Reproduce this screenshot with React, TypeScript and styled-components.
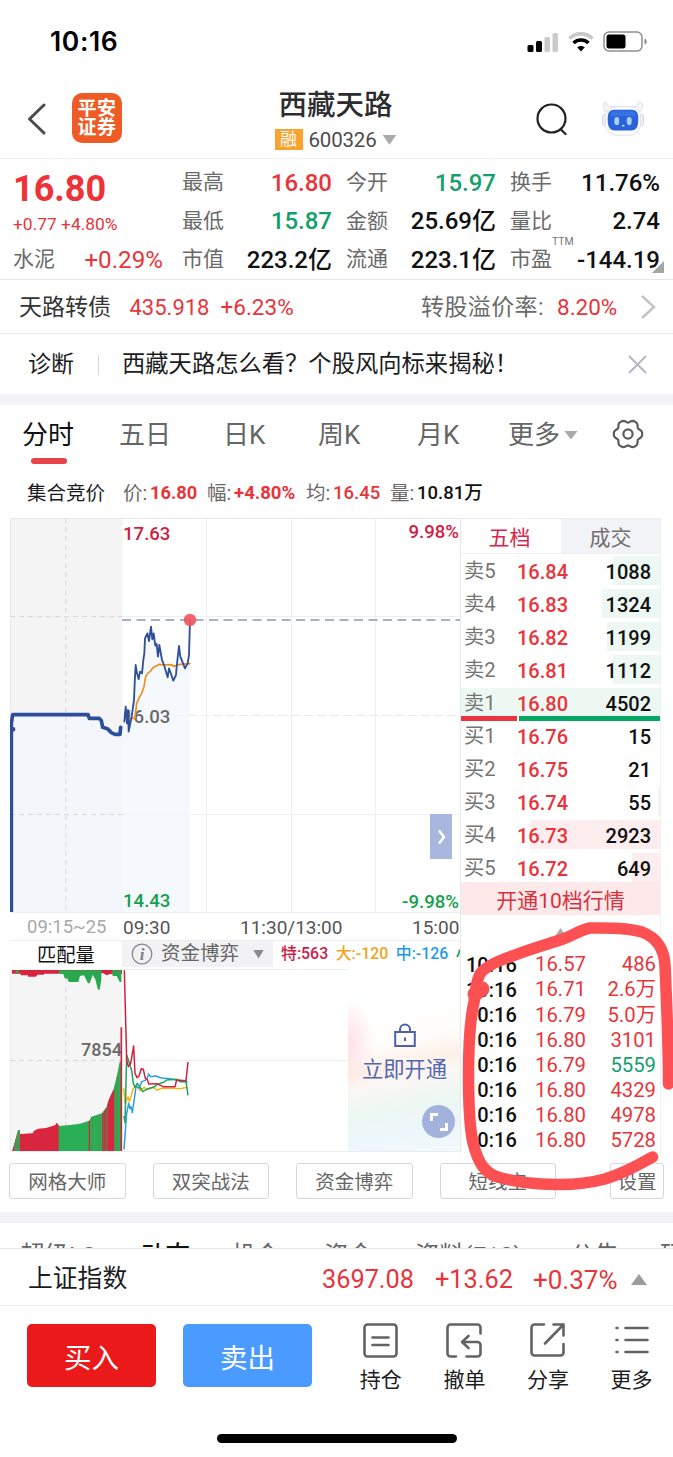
import React from "react";
import styled, { createGlobalStyle } from "styled-components";

const RED = "#e8343a";
const GREEN = "#14a06c";
const INK = "#1c1c1e";
const GREY = "#6a6a6a";

const Global = createGlobalStyle`
  * { box-sizing: border-box; }
  body { margin: 0; background: #fff; }
  svg { display: block; flex: none; }
`;

const Page = styled.main`
  position: relative;
  width: 673px;
  height: 1457px;
  overflow: hidden;
  background: #fff;
  color: ${INK};
  font-family: Roboto, "Noto Sans CJK SC", sans-serif;
  line-height: 1;
  white-space: nowrap;
`;

const Txt = styled.span<{ $s: number; $c?: string; $w?: number; $ls?: number }>`
  font-size: ${(p) => p.$s}px;
  color: ${(p) => p.$c || "inherit"};
  font-weight: ${(p) => p.$w || 400};
  letter-spacing: ${(p) => p.$ls || 0}px;
`;

const StatusBar = styled.div`
  display: flex;
  align-items: center;
  justify-content: space-between;
  height: 78px;
  padding: 5px 25px 0 50px;
`;
const Clock = styled.span`
  font: 600 26.5px/1 Inter, sans-serif;
  color: #000;
  letter-spacing: 0.6px;
`;
const StatusIcons = styled.div`
  display: flex;
  align-items: center;
  gap: 9px;
`;

const Header = styled.header`
  display: grid;
  grid-template-columns: 48px 150px 313px 66px 46px;
  align-items: center;
  height: 81px;
  padding-left: 24px;
  border-bottom: 1px solid #f0f0f2;
`;
const Logo = styled.div`
  width: 50px;
  height: 50px;
  border-radius: 10px;
  background: #ee5b24;
  color: #fff;
  font-size: 19px;
  font-weight: 700;
  line-height: 19px;
  letter-spacing: 0.5px;
  padding-top: 6px;
  text-align: center;
`;
const Title = styled.div`
  display: flex;
  flex-direction: column;
  align-items: center;
  gap: 9px;
  width: 227px;
  padding-top: 6px;
`;
const CodeLine = styled.div`
  display: flex;
  align-items: center;
  gap: 6px;
`;
const MarginBadge = styled.span`
  width: 28px;
  height: 21px;
  background: #fba32f;
  color: #fff;
  font-size: 17px;
  line-height: 21px;
  text-align: center;
`;
const Caret = styled.i<{ $up?: boolean; $w?: number; $h?: number; $c?: string; $ml?: number }>`
  flex: none;
  width: ${(p) => p.$w || 14}px;
  height: ${(p) => p.$h || 10}px;
  margin-left: ${(p) => p.$ml || 0}px;
  background: ${(p) => p.$c || "#aaa"};
  clip-path: ${(p) => (p.$up ? "polygon(50% 0,100% 100%,0 100%)" : "polygon(0 0,100% 0,50% 100%)")};
`;

const Quote = styled.section`
  position: relative;
  display: grid;
  grid-template-columns: 150px 150px 150px 150px;
  column-gap: 14px;
  height: 121px;
  padding: 4.5px 13px 0;
  border-bottom: 1px solid #e6e6e9;
`;
const QuoteCol = styled.div<{ $first?: boolean }>`
  display: grid;
  grid-template-rows: repeat(3, 38.5px);
  margin-left: ${(p) => (p.$first ? "0" : "5px")};
  margin-right: ${(p) => (p.$first ? "0" : "-5px")};
`;
const Cell = styled.div<{ $drop?: number }>`
  display: flex;
  align-items: center;
  justify-content: space-between;
  padding-top: ${(p) => p.$drop || 0}px;
`;
const Ttm = styled.span`
  position: absolute;
  left: 552px;
  top: 78px;
  font-size: 10.5px;
  color: #777;
`;
const Corner = styled.i`
  position: absolute;
  left: 652px;
  top: 102px;
  width: 12px;
  height: 12px;
  background: #a5a5a5;
  clip-path: polygon(100% 0, 100% 100%, 0 100%);
`;

const BondRow = styled.section`
  display: grid;
  grid-template-columns: 110.5px 91px 200.5px 136px 83px 20px;
  align-items: center;
  height: 54px;
  padding: 2px 0 0 19px;
  border-bottom: 1px solid #e9e9ec;
`;
const Diagnose = styled.section`
  display: grid;
  grid-template-columns: 70px 24px 506px 20px;
  align-items: center;
  height: 60px;
  padding: 1px 0 0 28px;
`;
const Divider = styled.i`
  width: 1px;
  height: 20px;
  background: #d5d5d8;
`;
const Band = styled.div`
  height: 11px;
  background: #f2f2f7;
`;

const Tabs = styled.nav`
  display: grid;
  grid-template-columns: 97px 104px 95px 99px 91px 104px 32px;
  align-items: center;
  height: 58px;
  padding-left: 22px;
  font-size: 26px;
  color: #666;
`;
const Tab = styled.div<{ $on?: boolean }>`
  position: relative;
  display: flex;
  align-items: center;
  gap: 4px;
  height: 58px;
  padding-top: 2px;
  color: ${(p) => (p.$on ? "#111" : "#666")};
  &::after {
    content: "";
    display: ${(p) => (p.$on ? "block" : "none")};
    position: absolute;
    left: 9px;
    bottom: -1px;
    width: 36px;
    height: 6px;
    border-radius: 3px;
    background: #e6434a;
  }
`;
const InfoRow = styled.div`
  display: grid;
  grid-template-columns: 96px 84px 99px 84px 100px;
  align-items: center;
  height: 55px;
  padding: 6px 0 0 27px;
`;
const InfoItem = styled.div`
  display: grid;
  grid-template-columns: 27px auto;
  align-items: center;
  justify-content: start;
`;

const Market = styled.section`
  display: grid;
  grid-template-columns: 451px 200px;
  width: 651px;
  height: 634px;
  margin-left: 10px;
`;
const Left = styled.div`
  position: relative;
  border-right: 1px solid #e6e9ee;
`;
const Expand = styled.button`
  position: absolute;
  left: 420px;
  top: 296px;
  width: 22px;
  height: 45px;
  border: 0;
  padding: 0 0 0 2px;
  background: #a9b7df;
  display: grid;
  place-items: center;
`;
const Axis = styled.div`
  display: grid;
  grid-template-columns: 96px 117px 172px 50px;
  align-items: center;
  height: 28px;
  padding: 2px 0 0 17px;
  border-top: 1px solid #eceef1;
`;
const IndicatorRow = styled.div`
  display: grid;
  grid-template-columns: 112px 151px 1fr;
  height: 29px;
  border-top: 1px solid #eceef1;
`;
const MatchLabel = styled.div`
  padding: 5px 0 0 27px;
`;
const Selector = styled.div`
  display: flex;
  align-items: center;
  gap: 8px;
  height: 26px;
  padding-left: 9px;
  background: #f2f2f4;
`;
const Flows = styled.div`
  display: flex;
  gap: 7.5px;
  padding: 5px 0 0 8px;
  overflow: hidden;
  height: 26px;
`;
const FundChart = styled.div`
  position: relative;
  height: 183px;
  border-bottom: 1px solid #e9ecf0;
`;
const Unlock = styled.div`
  position: absolute;
  left: 338px;
  top: 12px;
  width: 112px;
  height: 170px;
  display: flex;
  flex-direction: column;
  align-items: center;
  gap: 11px;
  padding: 42px 0 0 1px;
  background:
    radial-gradient(ellipse 26px 46px at 0 62px, rgba(255, 216, 224, 0.8), rgba(255, 255, 255, 0)),
    linear-gradient(168deg, #fff 22%, #fffdfb 36%, #fdf0e9 49%, #fbf7f5 57%, #ebf7f2 72%, #ecf6fa 84%, #f4f9fd 100%);
`;
const FullScreen = styled.button`
  position: absolute;
  left: 412px;
  top: 136px;
  width: 33px;
  height: 33px;
  border: 0;
  padding: 0;
  border-radius: 50%;
  background: #a3b2dc;
  display: grid;
  place-items: center;
`;

const Right = styled.div`
  position: relative;
  border-right: 1px solid #f0f1f3;
  border-top: 1px solid #ececef;
`;
const BookTabs = styled.div`
  display: grid;
  grid-template-columns: 100px 99px;
  height: 35px;
  border-bottom: 1px solid #eeeef0;
`;
const BookTab = styled.div<{ $on?: boolean }>`
  display: flex;
  align-items: center;
  justify-content: center;
  padding-top: 4px;
  font-size: 21px;
  padding-right: ${(p) => (p.$on ? 3 : 0)}px;
  color: ${(p) => (p.$on ? "#d8264b" : "#6f6f6f")};
  background: ${(p) => (p.$on ? "#fff" : "#f2f3f6")};
`;
const Level = styled.div<{ $depth: number; $tint: string }>`
  display: grid;
  grid-template-columns: 53px 60px 1fr;
  align-items: center;
  height: 33px;
  padding: 2px 9px 0 3px;
  background: linear-gradient(${(p) => p.$tint}, ${(p) => p.$tint}) right 0 top 2px / ${(p) => p.$depth}px 29px no-repeat;
  & > :last-child { text-align: right; }
`;
const Ratio = styled.div`
  position: relative;
  display: grid;
  grid-template-columns: 56px 1fr;
  gap: 2px;
  height: 5px;
  margin: -3px 0 -2px;
  i:first-child { background: #ee3340; }
  i:last-child { background: #06a765; }
`;
const Promo = styled.div`
  height: 33px;
  margin-top: -2px;
  padding-top: 9px;
  background: #fde9ea;
  color: #d9303e;
  font-size: 21px;
  text-align: center;
`;
const Collapse = styled.div`
  display: flex;
  justify-content: center;
  height: 37px;
  padding-top: 13px;
`;
const Trade = styled.div`
  display: grid;
  grid-template-columns: 69px 60px 1fr;
  align-items: center;
  height: 25.1px;
  padding: 0 4px 0 5px;
  & > :last-child { text-align: right; }
`;

const Tools = styled.div`
  display: grid;
  grid-template-columns: 116.5px 116.5px 116.5px 116.5px 53px;
  column-gap: 27px;
  height: 60px;
  padding: 11px 0 0 9px;
`;
const Tool = styled.button<{ $last?: boolean }>`
  height: 36px;
  margin-left: ${(p) => (p.$last ? "27px" : "0")};
  width: ${(p) => (p.$last ? "54px" : "auto")};
  border: 1px solid #d6d6dc;
  border-radius: 3px;
  background: #fff;
  padding: 4px 0 0;
  color: #666;
  font: 19.5px/30px Roboto, "Noto Sans CJK SC", sans-serif;
`;
const SectionTabs = styled.nav`
  display: grid;
  grid-template-columns: 121px 90px 93px 91px 155px 90px 60px;
  height: 26px;
  padding: 21px 0 0 20px;
  overflow: hidden;
  font-size: 24.5px;
  color: #666;
  border-bottom: 1px solid #e8e8ea;
`;
const IndexBar = styled.div`
  display: grid;
  grid-template-columns: 294px 113px 98px 98px 16px;
  align-items: center;
  height: 57px;
  padding: 5px 0 0 28px;
  border-bottom: 1px solid #f0f0f2;
`;
const Footer = styled.footer`
  display: grid;
  grid-template-columns: 129px 129px 1fr;
  column-gap: 27px;
  height: 128px;
  padding: 18px 0 0 27px;
`;
const Order = styled.button<{ $c: string }>`
  height: 63px;
  border: 0;
  border-radius: 5px;
  background: ${(p) => p.$c};
  color: #fff;
  padding: 6px 0 0;
  font: 27.5px/1 Roboto, "Noto Sans CJK SC", sans-serif;
`;
const Actions = styled.div`
  display: grid;
  grid-template-columns: repeat(4, 83.6px);
`;
const Action = styled.div`
  display: flex;
  flex-direction: column;
  align-items: center;
  gap: 12px;
  margin-top: -1px;
  font-size: 21px;
`;
const HomeBar = styled.div`
  width: 240px;
  height: 9px;
  border-radius: 5px;
  margin-left: 217px;
  background: #000;
`;
const Marker = styled.svg`
  position: absolute;
  left: 455px;
  top: 915px;
  pointer-events: none;
`;

const sells = [
  ["卖5", "16.84", "1088", 47],
  ["卖4", "16.83", "1324", 58],
  ["卖3", "16.82", "1199", 53],
  ["卖2", "16.81", "1112", 47],
  ["卖1", "16.80", "4502", 199],
] as const;
const buys = [
  ["买1", "16.76", "15", 0],
  ["买2", "16.75", "21", 0],
  ["买3", "16.74", "55", 2],
  ["买4", "16.73", "2923", 130],
  ["买5", "16.72", "649", 28],
] as const;
const trades = [
  ["16.57", "486", RED],
  ["16.71", "2.6万", RED],
  ["16.79", "5.0万", RED],
  ["16.80", "3101", RED],
  ["16.79", "5559", GREEN],
  ["16.80", "4329", RED],
  ["16.80", "4978", RED],
  ["16.80", "5728", RED],
] as const;

const quoteCols = [
  [["最高", "16.80", RED], ["最低", "15.87", GREEN], ["市值", "223.2亿", "#111"]],
  [["今开", "15.97", GREEN], ["金额", "25.69亿", "#111"], ["流通", "223.1亿", "#111"]],
  [["换手", "11.76%", "#111"], ["量比", "2.74", "#111"], ["市盈", "-144.19", "#111"]],
];

const Levels = ({ rows, tint }: { rows: readonly (readonly [string, string, string, number])[]; tint: string }) => (
  <>
    {rows.map(([k, p, q, d]) => (
      <Level key={k} $depth={d} $tint={tint}>
        <Txt $s={20.3} $c="#757575">{k}</Txt>
        <Txt $s={20} $c={RED} $w={500}>{p}</Txt>
        <Txt $s={20} $c="#111" $w={500}>{q}</Txt>
      </Level>
    ))}
  </>
);

const PriceChart = () => (
  <svg width="450" height="394" viewBox="10 518 450 394" fontFamily="Roboto" fontSize="18.6" fontWeight="500">
    <rect x="10" y="518" width="112.5" height="394" fill="#f4f4f5" />
    <path d="M12 715H88L99 719L105 728L121 734V912H12Z" fill="#f3f6fb" />
    <path d="M10 518.5H460M10.5 518V912" stroke="#e8e8eb" fill="none" />
    <path d="M206.500 518V912M291.500 518V912M375.500 518V912M122 616.500H460M122 814.500H460" stroke="#eeeff2" fill="none" />
    <path d="M66 518V912M10 616.500H122M10 814.500H122" stroke="#d9d9dc" strokeDasharray="5 4" fill="none" />
    <path d="M122 715.500H460" stroke="#e9e9ec" strokeDasharray="9 4" fill="none" />
    <path d="M122 620H460" stroke="#8b9aae" strokeWidth="1.6" strokeDasharray="9 5.500" fill="none" />
    <g transform="translate(0 510) scale(.33333)">
      <path d="M368 660L377 590L386 665L402 570L407 465L416 505L430 450L437 375L453 350L466 405L478 405L503 500L520 512L537 410L555 475L567 440L570 330V1206H368Z" fill="#f1f5fb" opacity=".75" />
    </g>
    <text x="123" y="540" fill="#d01c45">17.63</text>
    <text x="459" y="538" fill="#d01c45" textAnchor="end">9.98%</text>
    <text x="123" y="723" fill="#686868">16.03</text>
    <text x="123" y="907" fill="#14a04c">14.43</text>
    <text x="459" y="908" fill="#14a04c" textAnchor="end">-9.98%</text>
    <g transform="translate(0 510) scale(.33333)" fill="none" strokeLinejoin="round" strokeLinecap="round">
      <path d="M383 625H405L410 580L418 562L425 550L432 530L437 500L443 490L450 485L460 472L470 467L478 463L490 465L515 464L520 469L530 466L540 463L570 461" stroke="#ee8e1c" strokeWidth="5" />
      <path d="M373 635L377 590L381 640L384 600L386 665L395 620L402 570L404 520L407 465L411 490L416 507L420 485L426 490L430 450L433 430L435 385L442 370L447 393L453 350L457 388L461 370L466 407L470 402L474 440L478 405L486 450L492 465L503 502L507 475L520 512L528 495L530 470L537 408L541 440L547 455L555 475L563 460L567 435L570 330" stroke="#2f4f98" strokeWidth="5.500" />
      <path d="M34 1204V640L38 614H264L268 625H298L304 632L308 652L322 656L334 668L345 673H360L362 652" stroke="#2c4d98" strokeWidth="11" />
      <circle cx="39" cy="658" r="7" fill="#2c4d98" />
    </g>
    <circle cx="190" cy="620" r="6.200" fill="#f2545c" opacity=".9" />
  </svg>
);

const FlowChart = () => (
  <svg width="450" height="182" viewBox="10 969 450 182" fontFamily="Roboto" fontSize="18" fontWeight="500">
    <rect x="10" y="969" width="112" height="182" fill="#f5f5f6" />
    <path d="M122 969.500H348M122 1060.500H348M10.500 969V1151" stroke="#ebecef" fill="none" />
    <path d="M66 969V1151M10 1060.500H122" stroke="#d6d6d8" strokeDasharray="5 4" fill="none" />
    <g transform="translate(0 900) scale(.33333)" fill="none" strokeWidth="4.500" strokeLinejoin="round">
      <path d="M36 210H366V222H330L320 226L310 220H180L172 221H132V224H112L108 230H84V226H62V221H36Z" fill="#d6233f" />
      <path d="M46 211H56V221H50ZM176 211H304V240L299 269H294L286 238L278 225L269 250H264L252 226L240 228L235 246H206L203 236L194 235L190 222H178ZM336 211H364V246H359L350 228H338Z" fill="#2aa84f" />
      <path d="M36 754L55 690L60 702L98 700L102 692L115 686L138 684L165 676L170 668L177 676V754Z" fill="#d9263f" />
      <path d="M42 736L54 690L60 690V754H42Z" fill="#4b9455" />
      <path d="M176 754V678L210 675L240 671L268 662L274 650L306 640L320 620L326 600L340 570L350 530L359 485H366V754Z" fill="#2aae56" />
      <path d="M268 662V754M308 640V754M313 632V754M318 625V754M341 570V754" stroke="#c3323f" strokeWidth="4" />
      <path d="M322 754V615L326 600L340 570V754Z" fill="#d9263f" />
      <path d="M277 652V754M298 645V754M344 560V754M351 530V754" stroke="#7c7c4a" strokeWidth="2" />
      <path d="M364 382V754" stroke="#d3203f" strokeWidth="5" />
      <path d="M371 565L376 610L384 590L388 605L400 565L410 557L420 572L433 562L440 568L460 562L470 570L487 565H520L540 566L562 562" stroke="#f4b51c" />
      <path d="M372 748L380 640L386 610L390 626L393 620L397 638L404 590L408 560L418 564L425 545L436 541L442 533L446 522L452 530L466 528L485 534L510 536L540 542L563 545" stroke="#2b9fe4" />
      <path d="M372 648L375 668L380 465L387 485L395 512L400 550L405 562L412 550L419 560L428 575L440 568L460 562L475 552L490 547L500 540L530 538L540 545H558L564 586" stroke="#1fa455" />
      <path d="M373 211L380 480L385 500L392 490L401 438L403 480L405 520L411 533L417 528L424 506L430 508L436 535L442 538L446 552L470 551L490 560L525 560L530 540L558 542L564 486" stroke="#d3203f" />
    </g>
    <text x="81" y="1056" fill="#686868">7854</text>
  </svg>
);

/* Six-lobed outline of the settings gear. */
const gearPath =
  Array.from({ length: 72 }, (_, i) => {
    const a = (i / 72) * Math.PI * 2;
    const r = 13.1 + 1.4 * Math.cos(6 * a) - 0.3 * Math.cos(12 * a);
    return `${i ? "L" : "M"}${(16 + r * Math.cos(a)).toFixed(2)} ${(16 + r * Math.sin(a)).toFixed(2)}`;
  }).join("") + "Z";

const actionIcons: [string, React.ReactNode][] = [
  ["持仓", <><rect x="1.500" y="1.500" width="32" height="32" rx="3" /><path d="M9.500 14.500h16M9.500 22h16" /></>],
  ["撤单", <path d="M34.500 10.500V4.500a3 3 0 0 0-3-3h-27a3 3 0 0 0-3 3v26a3 3 0 0 0 3 3h5.500M20.500 33.500h11a3 3 0 0 0 3-3V22a3 3 0 0 0-3-3H16.500M22.500 13l-6.500 6 6.500 6" />],
  ["分享", <path d="M14 1.500H4.500a3 3 0 0 0-3 3v25a3 3 0 0 0 3 3h26a3 3 0 0 0 3-3V21M23.500 1.500h10v11M33.500 1.500L15 20.500" />],
  ["更多", <path d="M2.500 5h1M11.500 5h22M2.500 17h1M11.500 17h22M2.500 29h1M11.500 29h22" />],
];

export default function App() {
  return (
    <Page>
      <Global />
      <StatusBar>
        <Clock>10:16</Clock>
        <StatusIcons>
          <svg width="32" height="20" viewBox="0 0 32 20">
            <rect x="0.500" y="13" width="6" height="7" rx="1.500" fill="#000" />
            <rect x="9" y="9" width="6" height="11" rx="1.500" fill="#000" />
            <rect x="17.500" y="5" width="5.500" height="15" rx="1.500" fill="#cbcbcb" />
            <rect x="25.500" y="1" width="5.500" height="19" rx="1.500" fill="#cbcbcb" />
          </svg>
          <svg width="26" height="20" viewBox="0 0 26 20" fill="none" strokeWidth="3.600">
            <path d="M1.500 6.500a16.500 16.500 0 0 1 23 0" stroke="#c8c8c8" />
            <path d="M5.500 11a11 11 0 0 1 15 0" stroke="#000" />
            <path d="M9.200 15.300a5.800 5.800 0 0 1 7.600 0L13 19.500Z" fill="#000" />
          </svg>
          <svg width="45" height="21" viewBox="0 0 45 21">
            <rect x="1" y="1" width="38" height="19" rx="5" fill="none" stroke="#8e8e8e" strokeWidth="1.500" />
            <rect x="3.500" y="3.500" width="19" height="14" rx="2.500" fill="#000" />
            <path d="M41.500 7.500c3 .8 3 5.200 0 6z" fill="#8e8e8e" />
          </svg>
        </StatusIcons>
      </StatusBar>

      <Header>
        <svg width="24" height="34" viewBox="0 0 24 34" fill="none" stroke="#4b4b4b" strokeWidth="3" strokeLinecap="round" strokeLinejoin="round">
          <path d="M20 4L5.500 18L20 32" />
        </svg>
        <Logo>平安<br />证券</Logo>
        <Title>
          <Txt $s={28.5} $w={500} $c="#2c2c2e">西藏天路</Txt>
          <CodeLine>
            <MarginBadge>融</MarginBadge>
            <Txt $s={20.5} $c="#4c4c4c" $ls={-0.2}>600326</Txt>
            <Caret />
          </CodeLine>
        </Title>
        <svg width="34" height="34" viewBox="0 0 34 34" fill="none" stroke="#222" strokeWidth="2.200" strokeLinecap="round">
          <circle cx="16.500" cy="17.500" r="14" />
          <path d="M26 28.500l4.500 4.500" />
        </svg>
        <svg width="44" height="38" viewBox="0 0 46 38">
          <path d="M4 12C1 6 2 3 5 2c1 4 3 5 7 5h21c4 0 6-1 7-5 4 1 5 5 2 10z" fill="#f4f5f8" stroke="#dfe1e7" />
          <rect x="1.500" y="15" width="6" height="12" rx="3" fill="#eceef3" stroke="#d3d6dd" />
          <rect x="38.500" y="15" width="6" height="12" rx="3" fill="#eceef3" stroke="#d3d6dd" />
          <rect x="4.500" y="7" width="37" height="30" rx="12" fill="#fafbfc" stroke="#e0e3e9" />
          <path d="M14 10.500h18c5 0 7 3 7 9.500 0 9-2.500 12-8 12H15c-5.500 0-8-3-8-12 0-6.500 2-9.500 7-9.500z" fill="#2a62dc" />
          <path d="M14 12h18c3 0 4 2 4 5H10c0-3 1-5 4-5z" fill="#3a72e6" />
          <rect x="14" y="18" width="5" height="8.500" rx="2.500" fill="#a9cffb" />
          <rect x="27" y="18" width="5" height="8.500" rx="2.500" fill="#a9cffb" />
          <path d="M22 27h2.500" stroke="#dbeaff" strokeWidth="1.500" />
        </svg>
      </Header>

      <Quote>
        <QuoteCol $first>
          <Cell $drop={12}><Txt $s={36} $w={700} $c="#ee3237">16.80</Txt></Cell>
          <Cell $drop={6}><Txt $s={17.4} $c={RED}>+0.77 +4.80%</Txt></Cell>
          <Cell><Txt $s={21} $c={GREY}>水泥</Txt><Txt $s={24.2} $c={RED}>+0.29%</Txt></Cell>
        </QuoteCol>
        {quoteCols.map((col, i) => (
          <QuoteCol key={i}>
            {col.map(([k, v, c]) => (
              <Cell key={k}>
                <Txt $s={21} $c={GREY}>{k}</Txt>
                <Txt $s={24} $c={c} $w={500}>{v}</Txt>
              </Cell>
            ))}
          </QuoteCol>
        ))}
        <Ttm>TTM</Ttm>
        <Corner />
      </Quote>

      <BondRow>
        <Txt $s={23} $c="#333">天路转债</Txt>
        <Txt $s={22} $c={RED}>435.918</Txt>
        <Txt $s={22.5} $c={RED}>+6.23%</Txt>
        <Txt $s={23} $c={GREY} $ls={0.4}>转股溢价率:</Txt>
        <Txt $s={22.5} $c={RED}>8.20%</Txt>
        <svg width="20" height="28" viewBox="0 0 20 28" fill="none" stroke="#c4c4c4" strokeWidth="2.500">
          <path d="M2 2l12 11L2 24" />
        </svg>
      </BondRow>

      <Diagnose>
        <Txt $s={23}>诊断</Txt>
        <Divider />
        <Txt $s={23.3}>西藏天路怎么看？个股风向标来揭秘！</Txt>
        <svg width="20" height="20" viewBox="0 0 20 20" stroke="#b3b3c4" strokeWidth="1.800">
          <path d="M1 1l17 17M18 1L1 18" />
        </svg>
      </Diagnose>
      <Band />

      <Tabs>
        <Tab $on>分时</Tab>
        <Tab>五日</Tab>
        <Tab>日K</Tab>
        <Tab>周K</Tab>
        <Tab>月K</Tab>
        <Tab>更多<Caret $w={14} $h={9} /></Tab>
        <svg width="32" height="32" viewBox="0 0 32 32" fill="none" stroke="#5c5c5c" strokeWidth="2.200" strokeLinejoin="round">
          <path d={gearPath} />
          <circle cx="16" cy="16" r="4.600" />
        </svg>
      </Tabs>

      <InfoRow>
        <Txt $s={19.5}>集合竞价</Txt>
        <InfoItem><Txt $s={19.5} $c={GREY}>价:</Txt><Txt $s={18.3} $c={RED} $w={700}>16.80</Txt></InfoItem>
        <InfoItem><Txt $s={19.5} $c={GREY}>幅:</Txt><Txt $s={18.6} $c={RED} $w={700}>+4.80%</Txt></InfoItem>
        <InfoItem><Txt $s={19.5} $c={GREY}>均:</Txt><Txt $s={18.5} $c={RED} $w={500}>16.45</Txt></InfoItem>
        <InfoItem><Txt $s={19.5} $c={GREY}>量:</Txt><Txt $s={18.5} $c="#111" $w={500}>10.81万</Txt></InfoItem>
      </InfoRow>

      <Market>
        <Left>
          <PriceChart />
          <Expand>
            <svg width="10" height="16" viewBox="0 0 10 16" fill="none" stroke="#fff" strokeWidth="2.500"><path d="M2 1.500L7 8L2 14.500" /></svg>
          </Expand>
          <Axis>
            <Txt $s={18.5} $c="#a8a8a8">09:15~25</Txt>
            <Txt $s={19} $c="#555">09:30</Txt>
            <Txt $s={19} $c="#555">11:30/13:00</Txt>
            <Txt $s={19} $c="#555">15:00</Txt>
          </Axis>
          <IndicatorRow>
            <MatchLabel><Txt $s={19.3} $c="#111">匹配量</Txt></MatchLabel>
            <Selector>
              <svg width="22" height="22" viewBox="0 0 22 22">
                <circle cx="11" cy="11" r="9.800" fill="none" stroke="#8a8a8a" strokeWidth="1.300" />
                <text x="11" y="16.500" textAnchor="middle" fontFamily="Liberation Serif" fontStyle="italic" fontWeight="700" fontSize="17" fill="#808080">i</text>
              </svg>
              <Txt $s={19.5} $c="#666">资金博弈</Txt>
              <Caret $w={11} $h={9} $c="#8c8c8c" $ml={6} />
            </Selector>
            <Flows>
              <Txt $s={15.9} $w={500} $c="#d01c45">特:563</Txt>
              <Txt $s={15.9} $w={500} $c="#eda51b">大:-120</Txt>
              <Txt $s={15.9} $w={500} $c="#1c9be6">中:-126</Txt>
              <Txt $s={15.9} $w={500} $c="#14a04c">小:-317</Txt>
            </Flows>
          </IndicatorRow>
          <FundChart>
            <FlowChart />
            <Unlock>
              <svg width="22" height="25" viewBox="0 0 22 25" fill="none" stroke="#4c62b0" strokeWidth="2">
                <rect x="1.200" y="9" width="19.600" height="14" />
                <path d="M6 9V6.500a5 5 0 0 1 10 0V9M11 14.500v3.500" />
              </svg>
              <Txt $s={21.3} $c="#5366b2">立即开通</Txt>
            </Unlock>
            <FullScreen>
              <svg width="20" height="20" viewBox="0 0 20 20" fill="none" stroke="#fff" strokeWidth="3"><path d="M2.500 9V2.500H9M11 17.500h6.500V11" /></svg>
            </FullScreen>
          </FundChart>
        </Left>

        <Right>
          <BookTabs>
            <BookTab $on>五档</BookTab>
            <BookTab>成交</BookTab>
          </BookTabs>
          <Levels rows={sells} tint="#edf8f3" />
          <Ratio><i /><i /></Ratio>
          <Levels rows={buys} tint="#fdedef" />
          <Promo>开通10档行情</Promo>
          <Collapse><Caret $up $w={12} $h={9} /></Collapse>
          {trades.map(([p, q, c], i) => (
            <Trade key={i}>
              <Txt $s={20} $w={500} $c="#111">10:16</Txt>
              <Txt $s={20.3} $c={RED}>{p}</Txt>
              <Txt $s={20.3} $c={c}>{q}</Txt>
            </Trade>
          ))}
        </Right>
      </Market>

      <Tools>
        <Tool>网格大师</Tool>
        <Tool>双突战法</Tool>
        <Tool>资金博弈</Tool>
        <Tool>短线宝</Tool>
        <Tool $last>设置</Tool>
      </Tools>
      <Band />
      <SectionTabs>
        <span>超级L2</span>
        <Txt $s={24.5} $w={500} $c="#111">动态</Txt>
        <span>机会</span>
        <span>资金</span>
        <span>资料(F10)</span>
        <span>公告</span>
        <span>研报</span>
      </SectionTabs>

      <IndexBar>
        <Txt $s={24.8}>上证指数</Txt>
        <Txt $s={25.3} $c={RED}>3697.08</Txt>
        <Txt $s={25.3} $c={RED}>+13.62</Txt>
        <Txt $s={26} $c={RED}>+0.37%</Txt>
        <Caret $up $w={16} $h={11} $c="#9c9c9c" />
      </IndexBar>

      <Footer>
        <Order $c="#eb1919">买入</Order>
        <Order $c="#4b9aff">卖出</Order>
        <Actions>
          {actionIcons.map(([label, icon]) => (
            <Action key={label}>
              <svg width="36" height="35" viewBox="0 0 36 35" fill="none" stroke="#636363" strokeWidth="2.600" strokeLinecap="round" strokeLinejoin="round">{icon}</svg>
              {label}
            </Action>
          ))}
        </Actions>
      </Footer>
      <HomeBar />

      <Marker width="218" height="285" viewBox="455 915 218 285" fill="none" stroke="#fc5053" strokeWidth="11.500" strokeLinecap="round" strokeLinejoin="round">
        <path d="M668.500 1084C668.500 1040 666.500 1000 665 965C664 947 655 937 642 932C626 927 605 928 590 928C580 930 574 935 563 939C545 945 530 949 515 955C500 960 485 966 480 974C475 984 476 992 474 1002C469 1024 468.500 1050 468.500 1075C468.500 1100 469 1125 473 1143C478 1162 484 1173 498 1177C515 1182 535 1184 555 1184.500C575 1185 590 1183 605 1179C625 1173 640 1164 652.500 1157" />
        <path d="M475 994L482 989" strokeWidth="15" />
      </Marker>
    </Page>
  );
}
